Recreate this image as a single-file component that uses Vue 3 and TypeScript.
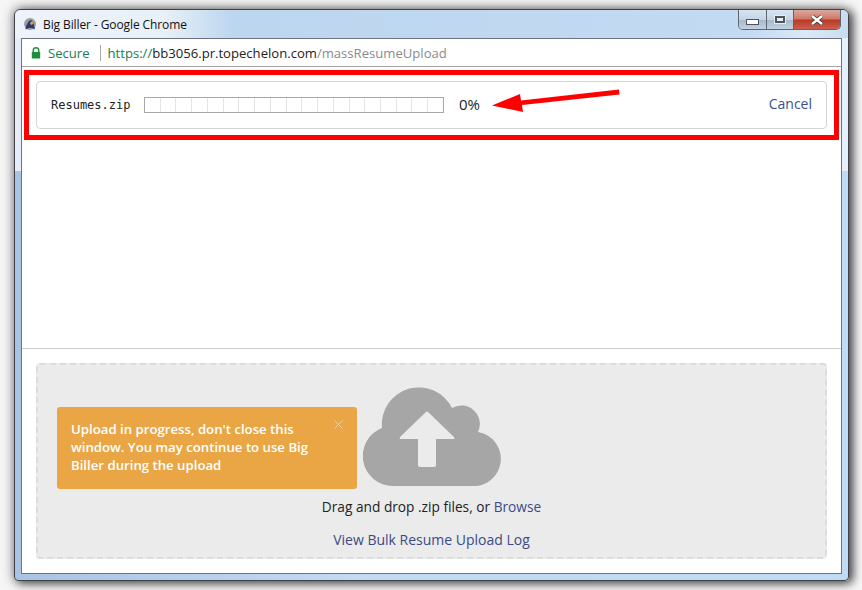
<script setup lang="ts">
const segments = Array.from({ length: 19 }, (_, i) => i);
</script>

<template>
  <div class="page">
    <div class="window">
      <div class="titlebar">
        <svg class="favicon" width="14" height="14" viewBox="0 0 14 14">
          <circle cx="7" cy="7" r="6" fill="#9d9da3" />
          <path d="M2.500 12.500 C3 8 5 4 8 3 C10 4 11.500 9 12 12.500 L9 11 L6 11 Z" fill="#2d3a6b" />
          <path d="M7 6 C9 4 10 4 10 7 L8 8 Z" fill="#d9a93c" />
        </svg>
        <span class="title">Big Biller - Google Chrome</span>
        <div class="controls">
          <div class="ctrl ctrl-min"><i class="min-glyph"></i></div>
          <div class="ctrl ctrl-max"><i class="max-glyph"></i></div>
          <div class="ctrl ctrl-close">
            <svg width="14" height="10" viewBox="0 0 14 10">
              <path d="M2 1 L12 9 M12 1 L2 9" stroke="#3c3c44" stroke-width="4" />
              <path d="M2 1 L12 9 M12 1 L2 9" stroke="#fff" stroke-width="2.4" />
            </svg>
          </div>
        </div>
      </div>

      <div class="client">
        <div class="addressbar">
          <svg class="lock" width="10" height="12" viewBox="0 0 10 12">
            <path d="M2.2 5.5 V3.6 a2.8 2.8 0 0 1 5.6 0 V5.5" fill="none" stroke="#1e8e3e" stroke-width="1.4" />
            <rect x="0.8" y="5" width="8.4" height="6.6" rx="0.6" fill="#1e8e3e" />
          </svg>
          <span class="secure">Secure</span>
          <span class="divider"></span>
          <span class="url"><span class="scheme">https://</span><span class="host">bb3056.pr.topechelon.com</span><span class="path">/massResumeUpload</span></span>
        </div>

        <div class="progress-area">
          <div class="upload-card">
            <span class="file-name">Resumes.zip</span>
            <div class="bar">
              <span v-for="s in segments" :key="s" class="segment"></span>
            </div>
            <span class="percent">0%</span>
            <a class="cancel">Cancel</a>
          </div>
          <div class="red-box"></div>
          <svg class="arrow" width="130" height="30" viewBox="0 0 130 30">
            <path d="M2 17.5 L30 6 L31 12.5 L129 1.5 L129.500 6.500 L32 17 L33 24 Z" fill="#ff0000" />
          </svg>
        </div>

        <div class="drop-area">
          <div class="dropzone">
            <div class="toast">
              <span>Upload in progress, don't close this window. You may continue to use Big Biller during the upload</span>
              <svg class="toast-close" width="9" height="9" viewBox="0 0 9 9">
                <path d="M0.500 0.500 L8.500 8.500 M8.500 0.500 L0.500 8.500" stroke="#f3cf9b" stroke-width="1" />
              </svg>
            </div>
            <svg class="cloud" width="138" height="100" viewBox="0 0 138 100">
              <path d="M30 100 A30 30 0 0 1 19 42 A37 37 0 0 1 89 22 A18.500 18.500 0 0 1 115 46 A27.200 27.200 0 0 1 109 100 Z" fill="#a6a6a6" />
              <path d="M63 26 Q64 25 65 26 L91 51 Q92 53 90 53 L73 53 L73 79 Q73 81 71 81 L57 81 Q55 81 55 79 L55 53 L38 53 Q36 53 37 51 Z" fill="#ebebeb" />
            </svg>
            <div class="drop-text">Drag and drop .zip files, or <a>Browse</a></div>
            <a class="log-link">View Bulk Resume Upload Log</a>
          </div>
        </div>
      </div>
    </div>
  </div>
</template>

<style scoped>
.page {
  width: 862px;
  height: 590px;
  padding: 9px 13px 9px 14px;
  box-sizing: border-box;
  overflow: hidden;
  background: #f6f6f6;
  font-family: "Open Sans", "Liberation Sans", sans-serif;
}
.window {
  position: relative;
  height: 100%;
  box-sizing: border-box;
  display: flex;
  flex-direction: column;
  padding: 0 6px 6px;
  border: 1px solid #3d4249;
  border-radius: 6px 6px 4px 4px;
  background:
    linear-gradient(90deg, #e6eff9 0%, #e6eff9 50%, #e4f0fc 100%) top / 100% 161px no-repeat,
    linear-gradient(90deg, #a9c3e2 0%, #c2daf4 40%, #c0dbf5 100%);
  box-shadow: 0 0 12px 1px rgba(0, 0, 0, 0.4), 4px 2px 10px rgba(0, 0, 0, 0.6);
}
.titlebar {
  height: 28px;
  flex: none;
  display: flex;
  align-items: center;
  margin: 0 -6px;
  padding: 0 7px 0 6px;
  border-radius: 6px 6px 0 0;
  background: linear-gradient(90deg, #eef3f9 0%, #e8f0f8 18%, #bdd6ef 26%, #c2daf2 88%, #dbe9f6 95%, #c8dcf0 100%);
}
.favicon {
  margin-left: 2px;
}
.title {
  margin-left: 6px;
  font: 12px "Open Sans", sans-serif;
  letter-spacing: -0.1px;
  color: #111;
}
.controls {
  margin-left: auto;
  align-self: flex-start;
  display: flex;
  height: 19px;
  border: 1px solid #5d6670;
  border-top: none;
  border-radius: 0 0 5px 5px;
  overflow: hidden;
}
.ctrl {
  display: flex;
  align-items: center;
  justify-content: center;
  background: linear-gradient(#d7e4f1 0%, #c5d5e5 50%, #a9b9ca 55%, #c2d2e2 100%);
}
.ctrl-min {
  width: 27px;
  border-right: 1px solid #5d6670;
}
.ctrl-max {
  width: 26px;
  border-right: 1px solid #5d6670;
}
.ctrl-close {
  width: 46px;
  background: linear-gradient(#dba99f 0%, #cf7a68 45%, #bd3a26 55%, #c9604e 100%);
}
.min-glyph {
  width: 11px;
  height: 4px;
  margin-top: 5px;
  background: #fff;
  border: 1px solid #4e5560;
  box-sizing: content-box;
}
.max-glyph {
  width: 6px;
  height: 3px;
  background: #e9eef4;
  border: 2px solid #4e5560;
  outline: 1px solid #e9eef4;
}
.client {
  flex: 1;
  min-height: 0;
  display: flex;
  flex-direction: column;
  background: #fff;
  border: 1px solid #6b7480;
}
.addressbar {
  height: 27px;
  flex: none;
  display: flex;
  align-items: center;
  padding-left: 9px;
  border-bottom: 1px solid #a6a6a6;
  font-size: 13.100px;
}
.secure {
  margin-left: 7px;
  color: #207a4c;
}
.divider {
  width: 1px;
  height: 16px;
  margin: 0 7px 0 10px;
  background: #a9a9a9;
}
.scheme {
  color: #207a4c;
}
.host {
  color: #222;
}
.path {
  color: #8a8a8a;
}
.progress-area {
  position: relative;
  flex: none;
  height: 282px;
  padding: 14px 14px 0;
  box-sizing: border-box;
  border-bottom: 1px solid #ccc;
}
.upload-card {
  height: 48px;
  display: flex;
  align-items: center;
  box-sizing: border-box;
  padding: 0 14px;
  border: 1px solid #d4d4d4;
  border-radius: 4px;
}
.file-name {
  width: 93px;
  flex: none;
  font: 12px "DejaVu Sans Mono", "Liberation Mono", monospace;
  color: #222;
}
.bar {
  width: 300px;
  height: 16px;
  flex: none;
  box-sizing: border-box;
  display: flex;
  border: 1px solid #a8a8a8;
}
.segment {
  flex: 1;
  border-right: 1px solid #e3e3e3;
}
.segment:last-child {
  border-right: none;
}
.percent {
  margin-left: 15px;
  margin-top: -3px;
  font-size: 15px;
  color: #222;
}
.cancel {
  margin-left: auto;
  margin-top: -4px;
  font-size: 14px;
  color: #3b4f8c;
}
.red-box {
  position: absolute;
  left: 2px;
  top: 3px;
  width: 815px;
  height: 70px;
  box-sizing: border-box;
  border: 5px solid #ff0000;
}
.arrow {
  position: absolute;
  left: 468px;
  top: 21px;
}
.drop-area {
  flex: 1;
  min-height: 0;
  padding: 14px;
}
.dropzone {
  position: relative;
  height: 196px;
  box-sizing: border-box;
  display: flex;
  flex-direction: column;
  align-items: center;
  padding-top: 21px;
  background: #ebebeb;
  border: 2px dashed #dcdcdc;
  border-radius: 4px;
  font-size: 13.700px;
  color: #222;
}
.toast {
  position: absolute;
  left: 19px;
  top: 42px;
  width: 300px;
  height: 82px;
  box-sizing: border-box;
  padding: 13px 40px 0 14px;
  background: #eaa645;
  border-radius: 3px;
  color: #fff;
  font-size: 13.200px;
  font-weight: 600;
  line-height: 18px;
}
.toast-close {
  position: absolute;
  right: 14px;
  top: 13px;
}
.cloud {
  flex: none;
}
.drop-text {
  margin-top: 12px;
  line-height: 18px;
}
.drop-text a,
.log-link {
  color: #3b4a86;
}
.log-link {
  margin-top: 15px;
  line-height: 18px;
  font-size: 14px;
}
</style>

<style>
body {
  margin: 0;
}
</style>
